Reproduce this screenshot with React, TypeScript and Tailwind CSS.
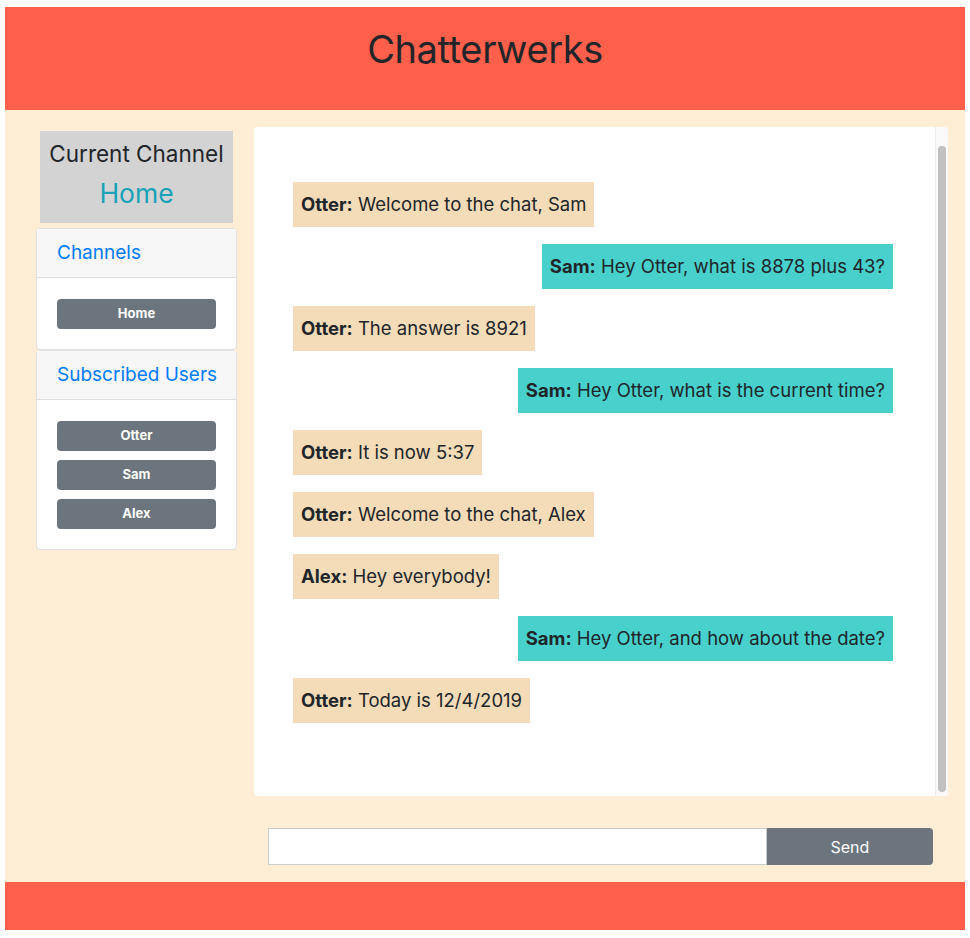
import { useState } from "react";

interface Message {
  from: string;
  text: string;
}

const messages: Message[] = [
  { from: "Otter", text: "Welcome to the chat, Sam" },
  { from: "Sam", text: "Hey Otter, what is 8878 plus 43?" },
  { from: "Otter", text: "The answer is 8921" },
  { from: "Sam", text: "Hey Otter, what is the current time?" },
  { from: "Otter", text: "It is now 5:37" },
  { from: "Otter", text: "Welcome to the chat, Alex" },
  { from: "Alex", text: "Hey everybody!" },
  { from: "Sam", text: "Hey Otter, and how about the date?" },
  { from: "Otter", text: "Today is 12/4/2019" },
];

const me = "Sam";
const channels = ["Home"];
const users = ["Otter", "Sam", "Alex"];

function SideCard({ title, items }: { title: string; items: string[] }) {
  return (
    <div className="rounded-[4px] border border-[#dfdfdf] bg-white">
      <div className="box-border flex h-[49px] items-center whitespace-nowrap border-b border-[#dfdfdf] bg-[#f7f7f7] px-5 pt-px text-[19px] text-[#007bff]">
        {title}
      </div>
      <div className="flex flex-col gap-[9px] px-5 pt-[21px] pb-5">
        {items.map((item) => (
          <button
            key={item}
            className="h-[30px] rounded-[4px] bg-[#6c757d] text-[13px] font-bold text-white"
          >
            {item}
          </button>
        ))}
      </div>
    </div>
  );
}

export default function App() {
  const [draft, setDraft] = useState("");

  return (
    <div className="bg-white px-[5px] pt-[7px] pb-[8px] font-['Inter',sans-serif] text-[#212529]">
      {/* Header */}
      <header className="h-[103px] bg-[#ff5f4b] pt-[18px] text-center">
        <h1 className="text-[38px] leading-[48px] font-normal tracking-[-0.01em]">Chatterwerks</h1>
      </header>

      <main className="h-[772px] bg-[#ffeed5] pl-[31px] pr-[17px] pt-[17px]">
        <div className="flex">
          {/* Sidebar */}
          <aside className="w-[201px] shrink-0 pt-1">
            <div className="mx-1 box-border h-[92px] bg-[#d3d3d3] pt-[7px] text-center">
              <div className="text-[22.5px] leading-[32px]">Current Channel</div>
              <div className="mt-[3px] text-[26.5px] leading-[40px] text-[#17a2b8]">Home</div>
            </div>
            <div className="mt-[5px]">
              <SideCard title="Channels" items={channels} />
              <SideCard title="Subscribed Users" items={users} />
            </div>
          </aside>

          {/* Chat window */}
          <div className="ml-[17px] flex-1">
            <div className="flex h-[669px] overflow-hidden rounded-[4px] bg-white">
              <div className="flex flex-1 flex-col gap-[17px] pl-[39px] pr-[42px] pt-[55px]">
                {messages.map((m, i) => (
                  <div
                    key={i}
                    className={
                      m.from === me
                        ? "self-end bg-[#48d1cc] px-2 py-[7px] text-[18.5px] leading-[31px]"
                        : "self-start bg-[#f5dcb9] px-2 py-[7px] text-[18.5px] leading-[31px]"
                    }
                  >
                    <span className="font-bold">{m.from}:</span> {m.text}
                  </div>
                ))}
              </div>
              {/* scrollbar */}
              <div className="flex w-[13px] shrink-0 justify-center border-l border-[#ececec] bg-[#f9f9f9] pb-1 pt-[19px]">
                <div className="w-[8px] rounded-full bg-[#c1c1c1]" />
              </div>
            </div>

            {/* Input row */}
            <div className="ml-[14px] mr-[15px] mt-[32px] flex h-[37px]">
              <input
                value={draft}
                onChange={(e) => setDraft(e.target.value)}
                className="w-3/4 border border-[#cccccc] bg-white px-3 outline-none"
              />
              <button className="w-1/4 rounded-r-[4px] bg-[#6c757d] text-[16px] text-white">
                Send
              </button>
            </div>
          </div>
        </div>
      </main>

      {/* Footer */}
      <footer className="h-[48px] bg-[#ff5f4b]" />
    </div>
  );
}
